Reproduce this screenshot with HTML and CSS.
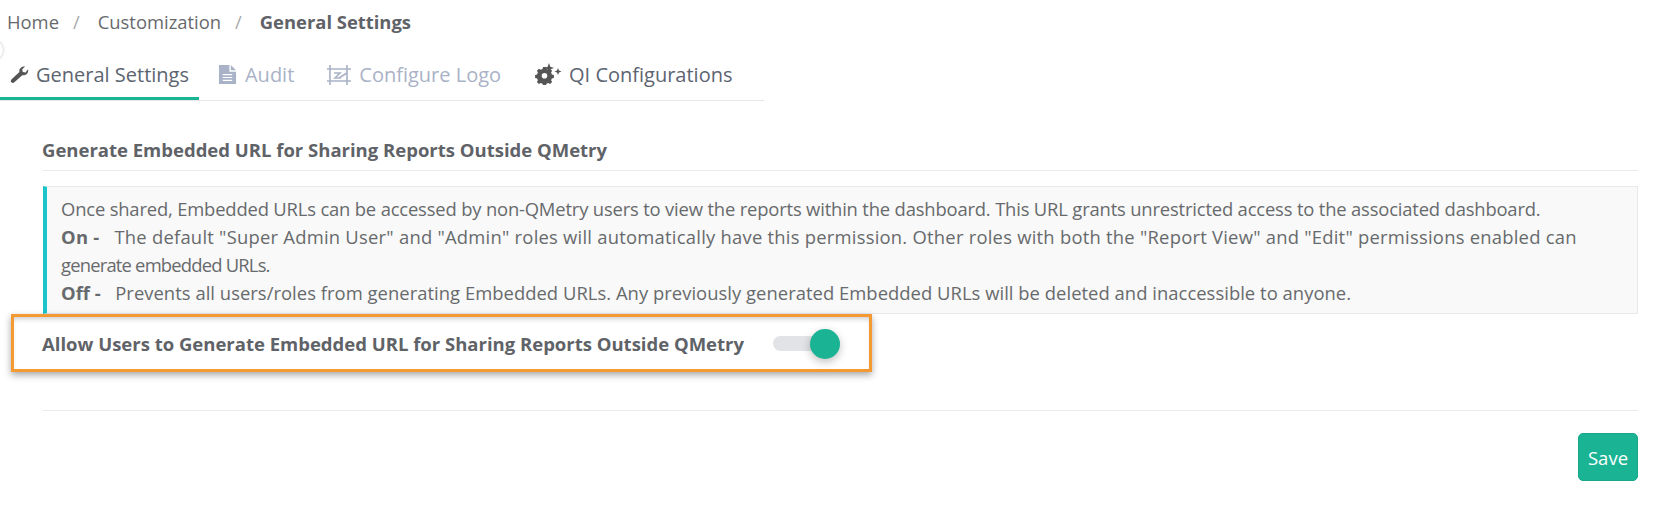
FILE: index.html
```html
<!DOCTYPE html>
<html lang="en">
<head>
  <meta charset="UTF-8" />
  <title>General Settings</title>
  <link rel="stylesheet" href="styles.css">
</head>
<body>
  <span class="side-toggle"></span>

  <div class="breadcrumb">
    <a>Home</a><span class="sep">/</span>
    <a>Customization</a><span class="sep">/</span>
    <strong>General Settings</strong>
  </div>

  <div class="tabs">
    <div class="tab active">
      <svg class="icon" viewBox="0 0 20 20"><path fill="#555" d="M19 4.600c.5 1.900 0 3.800-1.400 5-1.300 1.200-3 1.600-4.700 1.100L4.600 18.200c-1 .9-2.400.8-3.200-.1-.8-1-.7-2.300.3-3.200l8.200-7.500c-.4-1.700.1-3.400 1.500-4.600 1.300-1.100 3-1.500 4.500-1.100l-3 2.800.5 2.900 2.900.6z"/></svg>
      General Settings
    </div>
    <div class="tab muted">
      <svg class="icon" viewBox="0 0 20 20"><path fill="#a9b2c6" fill-rule="evenodd" d="M1 0h11v7h7v13H1zM13.500 0L19 5.500h-5.500zM5 9.500v1.300h10V9.500zM5 12.500v1.300h10v-1.300zM5 15.500v1.300h10v-1.300z"/></svg>
      Audit
    </div>
    <div class="tab muted">
      <svg class="icon wide" viewBox="0 0 24 20"><g fill="none" stroke="#a9b2c6" stroke-width="1.600"><path d="M0 4h24M0 16h24M3 0v20M20 0v20"/><path d="M7 8h6l-5 5h6M12 13l8-5"/></g></svg>
      Configure Logo
    </div>
    <div class="tab qi">
      <svg class="icon gear" viewBox="0 0 28 24"><path fill="#555" fill-rule="evenodd" d="M9 8h3l.5 2 1.800.8 1.800-1 2 2-1 1.800.8 1.800 2 .5v3l-2 .5-.8 1.800 1 1.800-2 2-1.800-1-1.800.7-.5 1.300H9l-.5-1.300-1.800-.7-1.800 1-2-2 1-1.800-.8-1.800-2-.5v-3l2-.5.8-1.800-1-1.800 2-2 1.800 1 1.800-.8zm1.500 6a2.800 2.800 0 1 0 0 5.600 2.800 2.800 0 0 0 0-5.600z" transform="translate(0 -4)"/><path fill="#555" d="M15 0l1.300 3.700L20 5l-3.700 1.300L15 10l-1.300-3.700L10 5l3.700-1.300zM24 5l1 2.500 2.500 1-2.500 1-1 2.500-1-2.500-2.500-1 2.500-1z"/></svg>
      QI Configurations
    </div>
  </div>

  <div class="content">
    <h4 class="section-title">Generate Embedded URL for Sharing Reports Outside QMetry</h4>

    <div class="info-box">
      <div class="line-intro">Once shared, Embedded URLs can be accessed by non-QMetry users to view the reports within the dashboard. This URL grants unrestricted access to the associated dashboard.</div>
      <div class="line-on"><b>On -</b>&nbsp;&nbsp; The default "Super Admin User" and "Admin" roles will automatically have this permission. Other roles with both the "Report View" and "Edit" permissions enabled can</div>
      <div class="line-wrap">generate embedded URLs.</div>
      <div class="line-off"><b>Off -</b>&nbsp;&nbsp; Prevents all users/roles from generating Embedded URLs. Any previously generated Embedded URLs will be deleted and inaccessible to anyone.</div>
    </div>

    <div class="highlight">
      <label class="allow-label">Allow Users to Generate Embedded URL for Sharing Reports Outside QMetry</label>
      <span class="switch"><span class="knob"></span></span>
    </div>

    <hr class="divider">

    <div class="actions">
      <button class="save-btn">Save</button>
    </div>
  </div>
</body>
</html>
```

FILE: styles.css
```css
body {
  margin: 0;
  height: 508px;
  overflow: hidden;
  background: #fff;
  font-family: "Open Sans", sans-serif;
  color: #5f6368;
  position: relative;
}

.side-toggle {
  position: absolute;
  left: -17px;
  top: 40px;
  width: 20px;
  height: 20px;
  background: #fff;
  border-radius: 50%;
  box-shadow: 0 0 3px #bbb;
}

.breadcrumb {
  height: 43px;
  margin-bottom: 3px;
  padding-left: 7px;
  display: flex;
  align-items: center;
  font-size: 18.400px;
}

.breadcrumb a {
  color: #676a6c;
}

.breadcrumb .sep {
  color: #aaa;
  margin: 0 18px 0 14px;
}

.breadcrumb strong {
  color: #5f6368;
}

.tabs {
  display: flex;
  width: 764px;
  height: 55px;
  box-sizing: border-box;
  border-bottom: 1px solid #e7e7e7;
}

.tab {
  display: flex;
  align-items: center;
  gap: 8px;
  height: 54px;
  box-sizing: border-box;
  padding: 6px 10px 0;
  margin-right: 13px;
  border-bottom: 3px solid transparent;
  font-size: 20px;
  color: #5c6470;
  white-space: nowrap;
}

.tab.active {
  gap: 7px;
  border-bottom-color: #1ab394;
  margin-right: 9px;
}

.tab.muted {
  color: #a9b2c6;
}

.tab.qi {
  gap: 7px;
}

.icon {
  width: 19px;
  height: 19px;
}

.icon.wide {
  width: 24px;
  height: 20px;
}

.icon.gear {
  width: 28px;
  height: 24px;
}

.content {
  margin: 0 38px 0 43px;
}

.section-title {
  margin: 0;
  height: 70px;
  box-sizing: border-box;
  padding-top: 37px;
  text-indent: -1px;
  font-size: 18.500px;
  line-height: 24px;
  font-weight: 700;
  color: #5f6368;
  border-bottom: 1px solid #e7eaec;
}

.info-box {
  margin-top: 15px;
  height: 128px;
  box-sizing: border-box;
  padding: 8px 10px 6px 14px;
  background: #f9f9f9;
  border: 1px solid #e7eaec;
  border-left: 4px solid #1cc5c9;
  font-size: 18.400px;
  line-height: 28px;
  color: #676a6c;
  white-space: nowrap;
}

.line-intro {
  letter-spacing: -0.17px;
}

.line-on {
  letter-spacing: 0.24px;
}

.line-wrap {
  letter-spacing: -0.8px;
}

.line-off {
  letter-spacing: 0.04px;
}

.highlight {
  display: flex;
  align-items: center;
  height: 58px;
  width: 861px;
  box-sizing: border-box;
  margin: 0 0 0 -32px;
  padding-left: 28px;
  border: 3px solid #f59a32;
  box-shadow: 0 3px 7px rgba(0, 0, 0, 0.35), inset 0 4px 5px -2px rgba(0, 0, 0, 0.2);
}

.allow-label {
  font-size: 18.500px;
  font-weight: 700;
  color: #5f6368;
}

.switch {
  position: relative;
  width: 67px;
  height: 15px;
  margin-left: 29px;
  background: #e1e3e6;
  border-radius: 8px;
}

.knob {
  position: absolute;
  right: 0;
  top: -7px;
  width: 30px;
  height: 30px;
  border-radius: 50%;
  background: #1ab394;
  box-shadow: 0 3px 8px rgba(0, 0, 0, 0.25);
}

.divider {
  margin: 38px 0 0;
  border: 0;
  border-top: 1px solid #e7eaec;
}

.actions {
  display: flex;
  justify-content: flex-end;
  margin-top: 22px;
}

.save-btn {
  width: 60px;
  height: 48px;
  padding: 0;
  font: 18.500px "Open Sans", sans-serif;
  color: #fff;
  background: #1ab394;
  border: 1px solid #18a689;
  border-radius: 5px;
}
```
